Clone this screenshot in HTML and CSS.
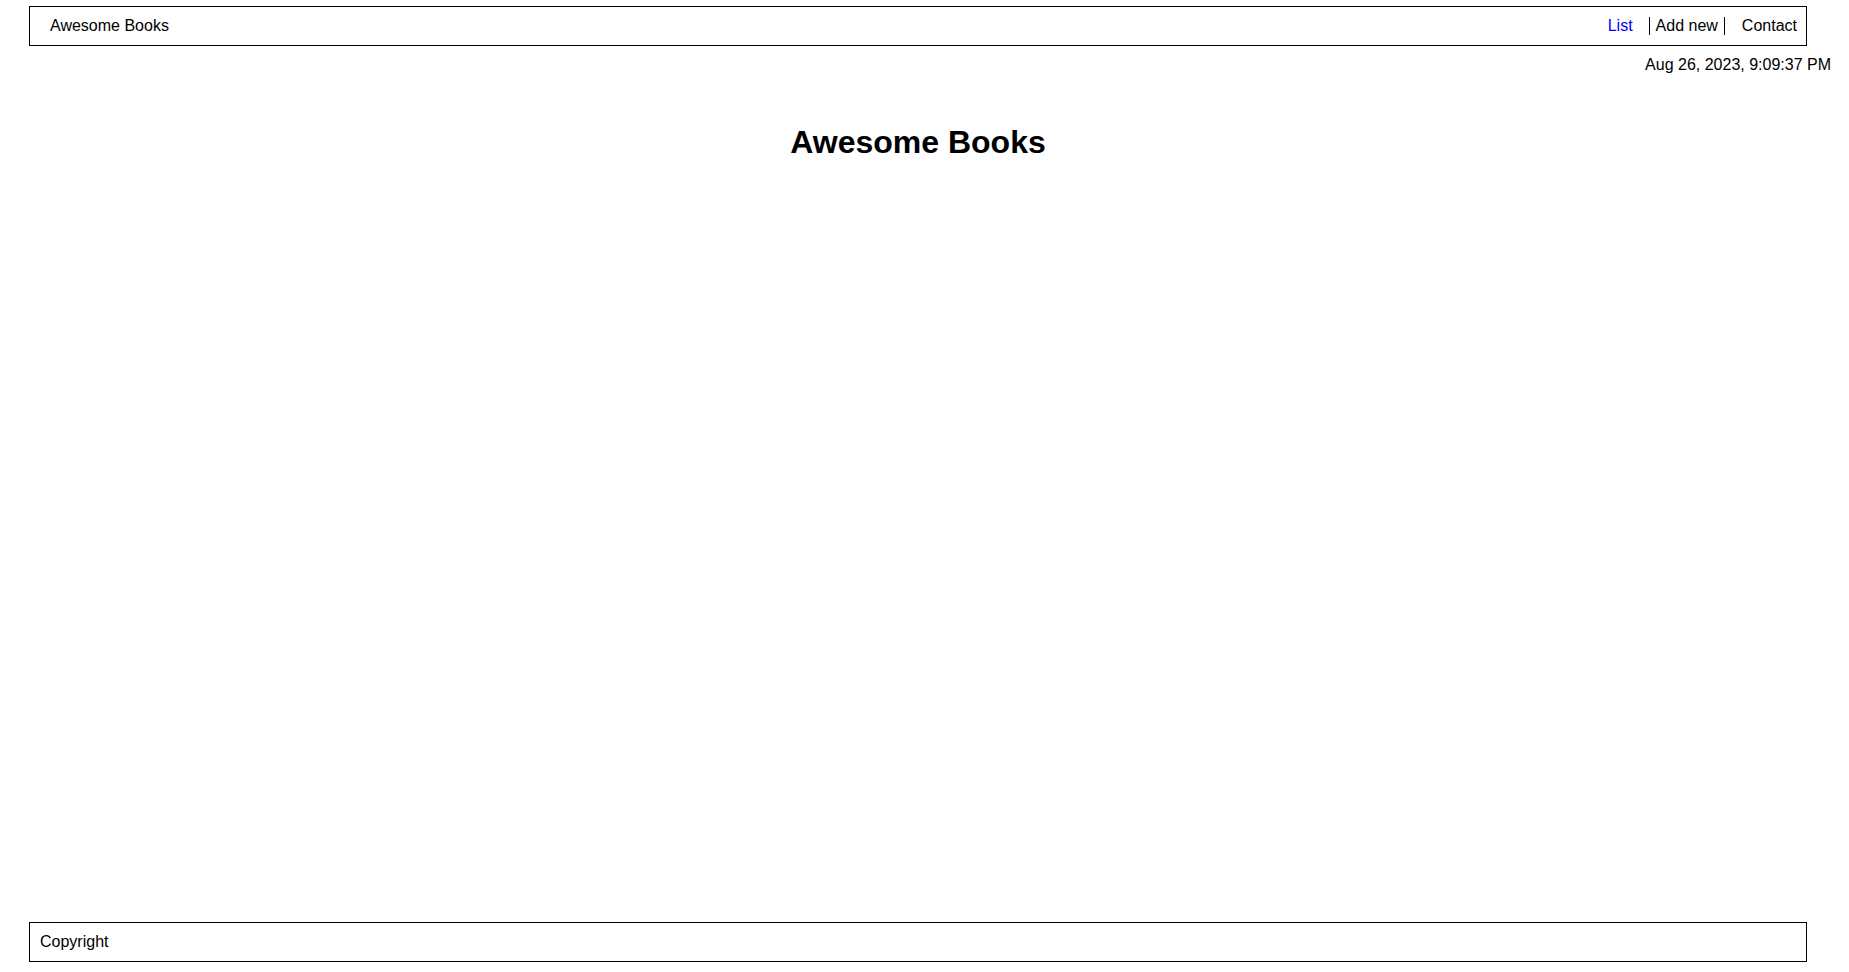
FILE: index.html
```html
<!DOCTYPE html>
<html lang="en">
<head>
<meta charset="utf-8">
<title>Awesome Books</title>
<link rel="stylesheet" href="styles.css">
</head>
<body>
<div class="page">
  <header class="topbar">
    <span class="brand">Awesome Books</span>
    <ul class="nav">
      <li class="nav-item nav-active">List</li>
      <li class="nav-item nav-sep">Add new</li>
      <li class="nav-item">Contact</li>
    </ul>
  </header>
  <div class="date">Aug 26, 2023, 9:09:37 PM</div>
  <main class="main">
    <h1 class="title">Awesome Books</h1>
  </main>
  <footer class="footer">Copyright</footer>
</div>
</body>
</html>
```
FILE: styles.css
```css
html, body {
  margin: 0;
  padding: 0;
  background: #fff;
}
body {
  font-family: "Liberation Sans", Arial, sans-serif;
  font-size: 16px;
  color: #000;
}
.page {
  min-height: 100vh;
  display: flex;
  flex-direction: column;
  box-sizing: border-box;
  padding-bottom: 10px;
}
.topbar {
  margin: 6px 42px 0 29px;
  height: 40px;
  box-sizing: border-box;
  border: 1px solid #000;
  display: flex;
  align-items: center;
  justify-content: space-between;
  padding: 0 3px 0 20px;
}
.brand {
  line-height: 18px;
}
.nav {
  list-style: none;
  margin: 0;
  padding: 0;
  display: flex;
  align-items: center;
  gap: 11px;
}
.nav-item {
  padding: 0 6px;
  line-height: 18px;
}
.nav-active {
  color: #0000ff;
  padding-right: 5px;
}
.nav-sep {
  border-left: 1px solid #000;
  border-right: 1px solid #000;
}
.date {
  margin-top: 10px;
  text-align: right;
  padding-right: 18px;
  line-height: 18px;
}
.main {
  margin: 0 42px 0 29px;
}
.title {
  margin: 50px 0 0;
  text-align: center;
  font-size: 32px;
  font-weight: bold;
  line-height: 37px;
}
.footer {
  margin: auto 42px 0 29px;
  height: 40px;
  box-sizing: border-box;
  border: 1px solid #000;
  display: flex;
  align-items: center;
  padding-left: 10px;
}
```
